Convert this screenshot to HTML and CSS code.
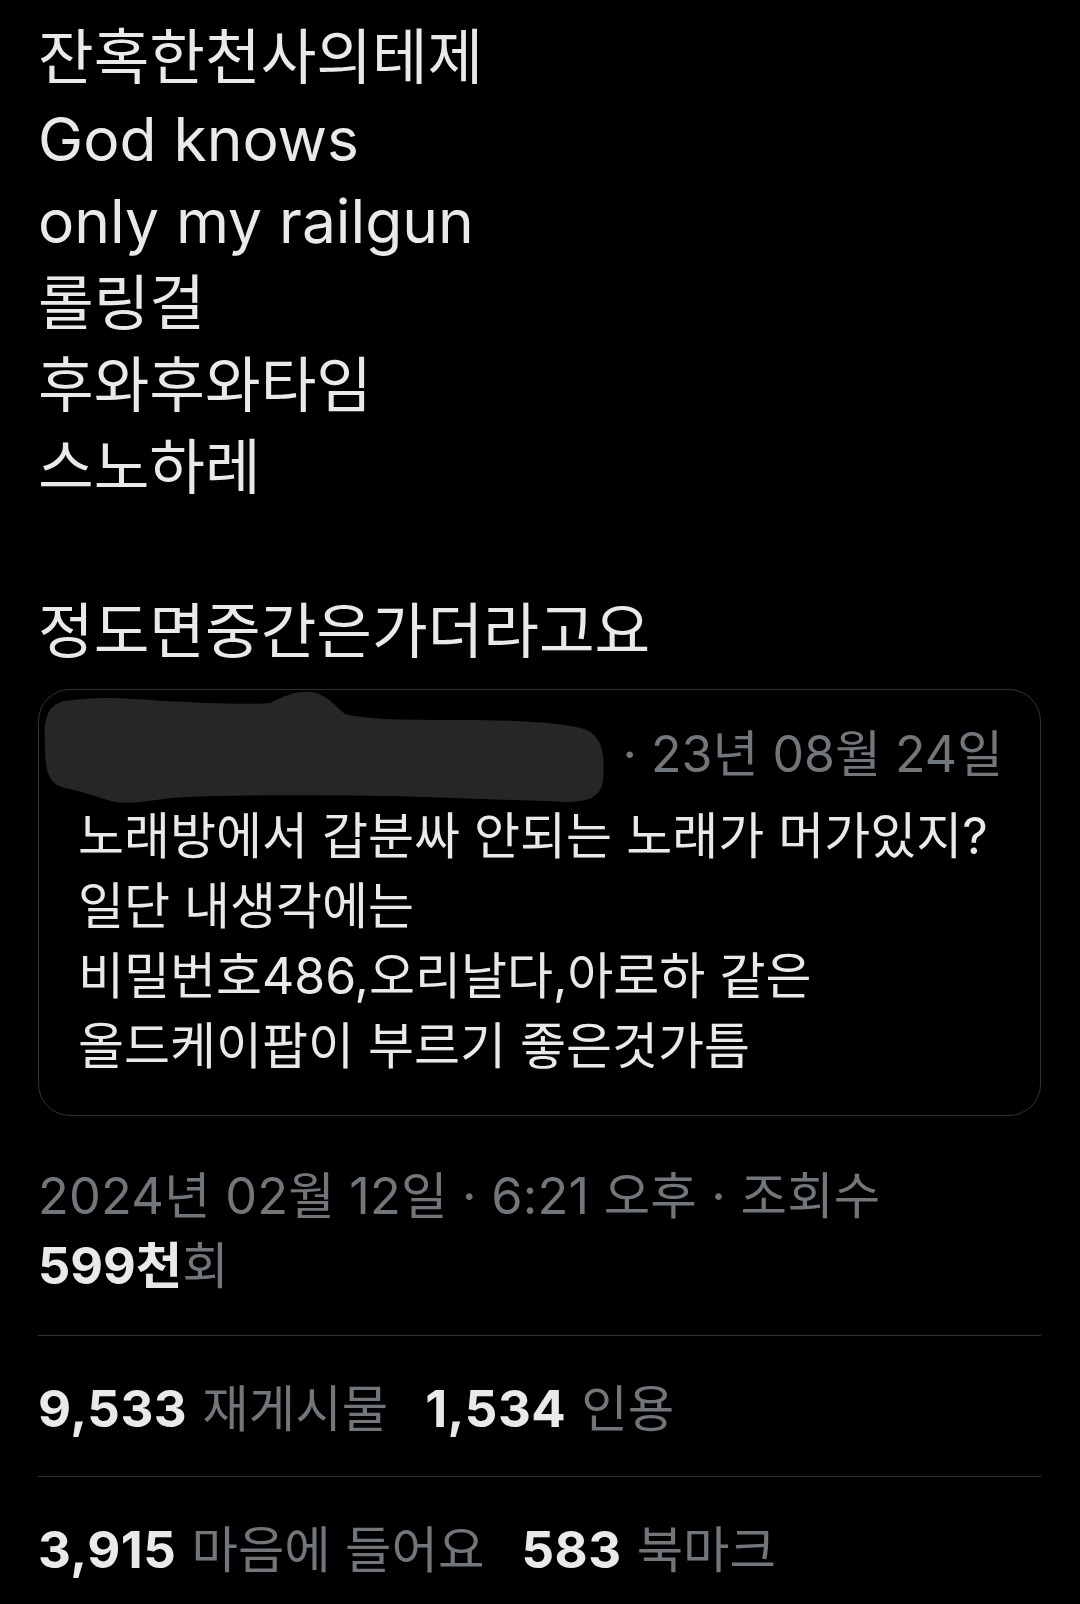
FILE: index.html
```html
<!DOCTYPE html>
<html lang="ko">
<head>
<meta charset="utf-8">
<link rel="stylesheet" href="styles.css">
</head>
<body>
<main class="tweet">
  <div class="tweet-text">
    <p class="line">잔혹한천사의테제</p>
    <p class="line">God knows</p>
    <p class="line">only my railgun</p>
    <p class="line">롤링걸</p>
    <p class="line">후와후와타임</p>
    <p class="line">스노하레</p>
    <p class="line blank">&nbsp;</p>
    <p class="line">정도면중간은가더라고요</p>
  </div>

  <section class="quote">
    <svg class="redact" viewBox="0 0 580 124" width="580" height="124" aria-hidden="true">
      <path d="M10 58 C8 30 14 18 30 15 C60 10 90 12 130 15 C170 17 210 19 236 17 C248 10 262 5 276 6 C292 8 300 20 310 28 C330 33 360 34 420 34 C480 34 530 36 552 44 C568 52 570 70 568 94 C566 110 556 116 530 116 C480 114 420 112 360 110 C280 109 200 109 150 111 C120 113 98 119 80 116 C66 113 52 106 30 102 C12 98 10 82 10 58 Z"/>
    </svg>
    <div class="quote-head">
      <span class="quote-date">· 23년 08월 24일</span>
    </div>
    <div class="quote-body">
      <p class="qline">노래방에서 갑분싸 안되는 노래가 머가있지?</p>
      <p class="qline">일단 내생각에는</p>
      <p class="qline">비밀번호486,오리날다,아로하 같은</p>
      <p class="qline">올드케이팝이 부르기 좋은것가틈</p>
    </div>
  </section>

  <div class="meta">
    <p class="meta-line">2024년 02월 12일 · 6:21 오후 · 조회수</p>
    <p class="meta-line"><b class="strong">599천</b>회</p>
  </div>

  <div class="stats">
    <div class="stat-row">
      <span class="stat"><b class="num">9,533</b><span class="label">재게시물</span></span>
      <span class="stat"><b class="num">1,534</b><span class="label">인용</span></span>
    </div>
    <div class="stat-row">
      <span class="stat"><b class="num">3,915</b><span class="label">마음에 들어요</span></span>
      <span class="stat"><b class="num">583</b><span class="label">북마크</span></span>
    </div>
  </div>
</main>
</body>
</html>
```

FILE: styles.css
```css
html, body {
  margin: 0;
  padding: 0;
  background: #000;
}

body {
  font-family: Inter, "Noto Sans CJK KR", sans-serif;
  color: #e7e9ea;
  width: 1080px;
  height: 1604px;
  overflow: hidden;
}

p { margin: 0; }

.tweet {
  padding: 16px 39px 0 38px;
}

.tweet-text .line {
  font-size: 60.5px;
  line-height: 82px;
  white-space: nowrap;
}

.quote {
  position: relative;
  margin-top: 17px;
  border: 1px solid #2f3336;
  border-radius: 32px;
  padding: 29px 37px 34px 39px;
}

.redact {
  position: absolute;
  left: -4px;
  top: -4px;
  fill: #262626;
}

.quote-head {
  display: flex;
  justify-content: flex-end;
  height: 70px;
  margin-bottom: 12px;
}

.quote-date {
  font-size: 50px;
  line-height: 70px;
  color: #71767b;
  white-space: nowrap;
}

.qline {
  font-size: 50px;
  line-height: 70px;
  white-space: nowrap;
}

.meta {
  margin-top: 45px;
  padding-bottom: 34px;
  border-bottom: 1px solid #2f3336;
}

.meta-line {
  font-size: 50.5px;
  line-height: 70px;
  color: #71767b;
  white-space: nowrap;
  letter-spacing: 0.2px;
}

.strong {
  color: #e7e9ea;
  font-weight: 700;
  letter-spacing: 0;
}

.stat-row {
  display: flex;
  gap: 37px;
  padding: 38px 0 32px;
  border-bottom: 1px solid #2f3336;
  font-size: 50px;
  line-height: 70px;
  white-space: nowrap;
}

.num {
  font-weight: 700;
  color: #e7e9ea;
  font-size: 51px;
  letter-spacing: 0.5px;
}

.label {
  color: #71767b;
  margin-left: 15px;
  font-size: 50.5px;
}
```
